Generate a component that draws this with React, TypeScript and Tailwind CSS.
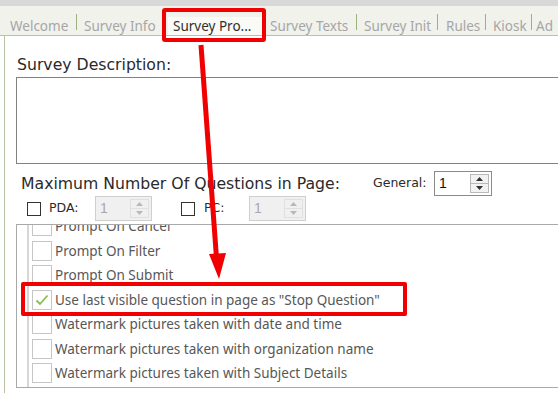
import React from 'react';

const Tab = ({ label, cls, active }: { label: string; cls: string; active?: boolean }) => (
  <div className={`${cls} h-full flex items-center whitespace-nowrap overflow-hidden ${active ? 'bg-[#fafaf6] text-[#303030]' : 'text-[#a6a6a6]'}`}>
    {label}
  </div>
);

const Sep = () => <div className="w-px h-[16px] mb-[5px] self-end bg-[#9fb07f]" />;

const Spin = ({ disabled, cls }: { disabled?: boolean; cls: string }) => (
  <div className={`${cls} h-[25px] flex border ${disabled ? 'border-[#cfcfcf] bg-[#f0f0f0] text-[#a8a8a8]' : 'border-[#8a8a8a] bg-white text-[#111]'}`}>
    <div className="flex-1 pl-[4px] pt-[2px] text-[14px] leading-[18px] font-['Liberation_Sans',sans-serif]">1</div>
    <div className={`w-[19px] my-[2px] mr-[2px] flex flex-col border ${disabled ? 'border-[#e0e0e0]' : 'border-[#b8b8b8] bg-[#f2f2f2]'}`}>
      <div className="flex-1 flex items-center justify-center">
        <svg width="7" height="4" viewBox="0 0 7 4"><path d="M0 4 L3.5 0 L7 4 Z" fill={disabled ? '#b8b8b8' : '#333'} /></svg>
      </div>
      <div className={`h-px ${disabled ? 'bg-[#e0e0e0]' : 'bg-[#b8b8b8]'}`} />
      <div className="flex-1 flex items-center justify-center">
        <svg width="7" height="4" viewBox="0 0 7 4"><path d="M0 0 L3.5 4 L7 0 Z" fill={disabled ? '#b8b8b8' : '#333'} /></svg>
      </div>
    </div>
  </div>
);

const Box = () => <div className="w-[14px] h-[14px] border border-[#333] bg-white" />;

const Item = ({ label, checked }: { label: string; checked?: boolean }) => (
  <div className="h-[24.5px] flex items-center">
    <div className="w-[20px] h-[20px] border border-[#c6c6c6] bg-white flex items-center justify-center shrink-0">
      {checked && (
        <svg width="14" height="12" viewBox="0 0 14 12">
          <path d="M1.5 6.5 L5 10 L12.5 1.5" fill="none" stroke="#86c04a" strokeWidth="1.8" />
        </svg>
      )}
    </div>
    <span className="ml-[3px] whitespace-nowrap text-[#575757]">{label}</span>
  </div>
);

export default function App() {
  return (
    <div className="w-[558px] h-[394px] relative overflow-hidden bg-white">
      {/* window top */}
      <div className="h-[6px] bg-[#d8d8d8]" />

      {/* tab strip */}
      <div className="h-[30px] flex bg-[#f1f2ec] border-b border-[#b7c4a4] text-[13.5px] font-['Noto_Sans',sans-serif] pt-[11px]">
        <Tab cls="ml-[10px] w-[66px]" label="Welcome" />
        <Sep />
        <Tab cls="w-[91px] pl-[7px]" label="Survey Info" />
        <Tab cls="w-[95px] pl-[5px]" label="Survey Pro..." active />
        <Tab cls="w-[93px] pl-[7px]" label="Survey Texts" />
        <Sep />
        <Tab cls="w-[80px] pl-[7px]" label="Survey Init" />
        <Sep />
        <Tab cls="w-[47px] pl-[8px]" label="Rules" />
        <Sep />
        <Tab cls="w-[45px] pl-[7px]" label="Kiosk" />
        <Sep />
        <Tab cls="flex-1 pl-[4px]" label="Ad" />
      </div>

      {/* page */}
      <div className="ml-[4px] h-[357px] border-l border-[#b7c4a4] pl-[11px] flex flex-col font-['DejaVu_Sans',sans-serif] text-[#2a2a2a]">
        <div className="mt-[19px] h-[19px] text-[15.7px] leading-[19px] pl-[1px]">Survey Description:</div>
        <div className="mt-[3px] h-[87px] w-[600px] border border-[#828282] bg-white" />

        <div className="mt-[7px] h-[24px] flex items-center">
          <span className="ml-[5px] text-[15.7px] leading-[19px] w-[352px] whitespace-nowrap">Maximum Number Of Questions in Page:</span>
          <span className="text-[12.5px] w-[61px]">General:</span>
          <Spin cls="w-[58px]" />
        </div>

        <div className="h-[27px] flex items-center text-[12.5px]">
          <div className="ml-[11px]"><Box /></div>
          <span className="ml-[8px] w-[46px]">PDA:</span>
          <Spin cls="w-[57px]" disabled />
          <div className="ml-[29px]"><Box /></div>
          <span className="ml-[9px] w-[45px]">PC:</span>
          <Spin cls="w-[57px]" disabled />
        </div>

        {/* options list */}
        <div className="mt-[2px] flex-1 border-t border-l border-b border-[#a9a9a9] overflow-hidden">
          <div className="ml-[10px] h-full border-l-2 border-double border-[#d6d6d6] pl-[3px] overflow-hidden font-['Noto_Sans',sans-serif] text-[13.5px]">
            <div className="mt-[-11px]">
              <Item label="Prompt On Cancel" />
              <Item label="Prompt On Filter" />
              <Item label="Prompt On Submit" />
              <Item label={'Use last visible question in page as "Stop Question"'} checked />
              <Item label="Watermark pictures taken with date and time" />
              <Item label="Watermark pictures taken with organization name" />
              <Item label="Watermark pictures taken with Subject Details" />
            </div>
          </div>
        </div>
        <div className="h-[5px]" />
      </div>

      {/* annotations */}
      <div className="absolute left-[162px] top-[8px] w-[104px] h-[34px] border-[4px] border-[#f00000] rounded-[3px]" />
      <div className="absolute left-[21px] top-[282px] w-[386px] h-[34px] border-[4px] border-[#f00000] rounded-[2px]" />
      <svg className="absolute left-0 top-0" width="558" height="394" viewBox="0 0 558 394">
        <line x1="201" y1="45" x2="216.5" y2="258" stroke="#f00000" strokeWidth="5" />
        <path d="M209 254 L226 253 L219 279 Z" fill="#f00000" />
      </svg>
    </div>
  );
}
